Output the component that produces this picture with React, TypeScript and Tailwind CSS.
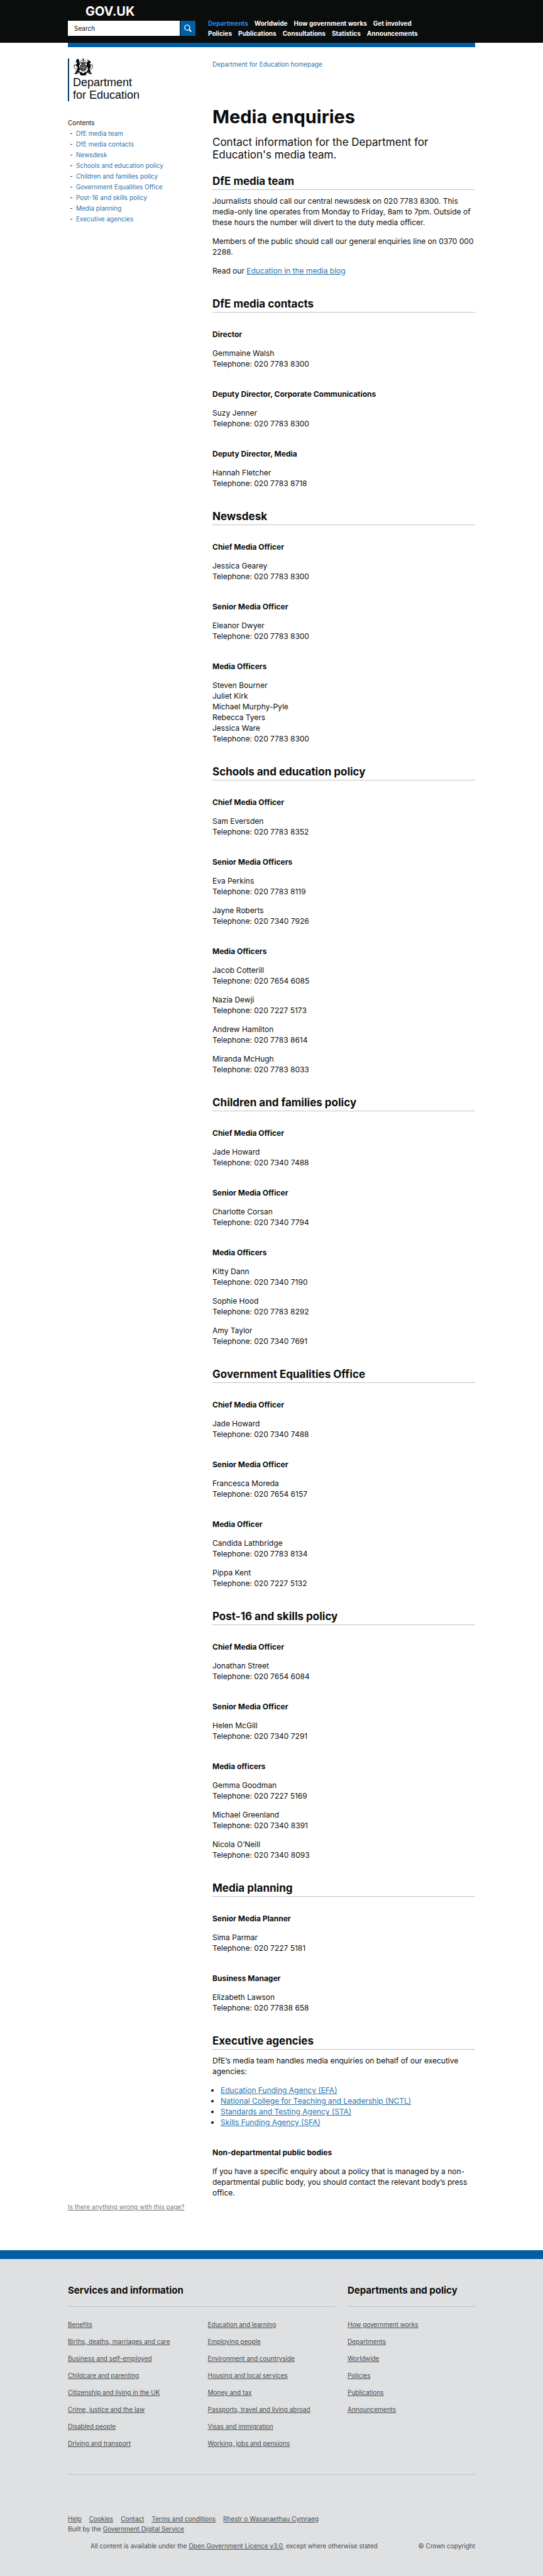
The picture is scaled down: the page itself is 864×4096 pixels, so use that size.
import React from "react";

type Contact = string[];
type Group = { role: string; contacts: Contact[] };
type Section = { title: string; groups: Group[] };

const tel = (n: string) => `Telephone: ${n}`;

const sections: Section[] = [
  {
    title: "DfE media contacts",
    groups: [
      { role: "Director", contacts: [["Gemmaine Walsh", tel("020 7783 8300")]] },
      { role: "Deputy Director, Corporate Communications", contacts: [["Suzy Jenner", tel("020 7783 8300")]] },
      { role: "Deputy Director, Media", contacts: [["Hannah Fletcher", tel("020 7783 8718")]] },
    ],
  },
  {
    title: "Newsdesk",
    groups: [
      { role: "Chief Media Officer", contacts: [["Jessica Gearey", tel("020 7783 8300")]] },
      { role: "Senior Media Officer", contacts: [["Eleanor Dwyer", tel("020 7783 8300")]] },
      {
        role: "Media Officers",
        contacts: [
          ["Steven Bourner", "Juliet Kirk", "Michael Murphy-Pyle", "Rebecca Tyers", "Jessica Ware", tel("020 7783 8300")],
        ],
      },
    ],
  },
  {
    title: "Schools and education policy",
    groups: [
      { role: "Chief Media Officer", contacts: [["Sam Eversden", tel("020 7783 8352")]] },
      {
        role: "Senior Media Officers",
        contacts: [
          ["Eva Perkins", tel("020 7783 8119")],
          ["Jayne Roberts", tel("020 7340 7926")],
        ],
      },
      {
        role: "Media Officers",
        contacts: [
          ["Jacob Cotterill", tel("020 7654 6085")],
          ["Nazia Dewji", tel("020 7227 5173")],
          ["Andrew Hamilton", tel("020 7783 8614")],
          ["Miranda McHugh", tel("020 7783 8033")],
        ],
      },
    ],
  },
  {
    title: "Children and families policy",
    groups: [
      { role: "Chief Media Officer", contacts: [["Jade Howard", tel("020 7340 7488")]] },
      { role: "Senior Media Officer", contacts: [["Charlotte Corsan", tel("020 7340 7794")]] },
      {
        role: "Media Officers",
        contacts: [
          ["Kitty Dann", tel("020 7340 7190")],
          ["Sophie Hood", tel("020 7783 8292")],
          ["Amy Taylor", tel("020 7340 7691")],
        ],
      },
    ],
  },
  {
    title: "Government Equalities Office",
    groups: [
      { role: "Chief Media Officer", contacts: [["Jade Howard", tel("020 7340 7488")]] },
      { role: "Senior Media Officer", contacts: [["Francesca Moreda", tel("020 7654 6157")]] },
      {
        role: "Media Officer",
        contacts: [
          ["Candida Lathbridge", tel("020 7783 8134")],
          ["Pippa Kent", tel("020 7227 5132")],
        ],
      },
    ],
  },
  {
    title: "Post-16 and skills policy",
    groups: [
      { role: "Chief Media Officer", contacts: [["Jonathan Street", tel("020 7654 6084")]] },
      { role: "Senior Media Officer", contacts: [["Helen McGill", tel("020 7340 7291")]] },
      {
        role: "Media officers",
        contacts: [
          ["Gemma Goodman", tel("020 7227 5169")],
          ["Michael Greenland", tel("020 7340 8391")],
          ["Nicola O’Neill", tel("020 7340 8093")],
        ],
      },
    ],
  },
  {
    title: "Media planning",
    groups: [
      { role: "Senior Media Planner", contacts: [["Sima Parmar", tel("020 7227 5181")]] },
      { role: "Business Manager", contacts: [["Elizabeth Lawson", tel("020 77838 658")]] },
    ],
  },
];

const contents = ["DfE media team", ...sections.map((s) => s.title), "Executive agencies"];

const navRows = [
  ["Departments", "Worldwide", "How government works", "Get involved"],
  ["Policies", "Publications", "Consultations", "Statistics", "Announcements"],
];

const agencies = [
  "Education Funding Agency (EFA)",
  "National College for Teaching and Leadership (NCTL)",
  "Standards and Testing Agency (STA)",
  "Skills Funding Agency (SFA)",
];

const services = [
  [
    "Benefits",
    "Births, deaths, marriages and care",
    "Business and self-employed",
    "Childcare and parenting",
    "Citizenship and living in the UK",
    "Crime, justice and the law",
    "Disabled people",
    "Driving and transport",
  ],
  [
    "Education and learning",
    "Employing people",
    "Environment and countryside",
    "Housing and local services",
    "Money and tax",
    "Passports, travel and living abroad",
    "Visas and immigration",
    "Working, jobs and pensions",
  ],
];

const policy = ["How government works", "Departments", "Worldwide", "Policies", "Publications", "Announcements"];

const slug = (s: string) => s.toLowerCase().replace(/[^a-z0-9]+/g, "-");

function Crest() {
  return (
    <svg viewBox="0 0 48 40" className="h-[27px] w-[33px]" fill="#0b0c0c" aria-hidden="true">
      {/* crown */}
      <path d="M23 0h1.6v2h1.6v1.3h-1.6V5H23V3.300h-1.600V2H23z" />
      <path
        d="M18 10.500c-2-4 .5-6.500 3-5.500 1.600.6 2.600 2 2.800 4 .2-2 1.200-3.400 2.800-4 2.500-1 5 1.500 3 5.500z"
        fill="none"
        stroke="#0b0c0c"
        strokeWidth="1.200"
      />
      <path d="M17.500 9.800h12.600l-.6 2.400H18.100z" />
      {/* shield and garter */}
      <ellipse cx="23.800" cy="21.300" rx="8" ry="9" />
      <ellipse cx="23.800" cy="21.300" rx="5.800" ry="6.800" fill="none" stroke="#fff" strokeWidth=".8" />
      <path d="M23.800 15v12.500M18.800 21.300h10M20.500 17.500v2M27 17.500v2M20.500 23.500v2M27 23.500v2" stroke="#fff" strokeWidth="1" />
      {/* lion */}
      <path d="M8 2.500l2-1.500 3 .8 1.500 2.200-.4 3.500 2 3-.4 4-1.500 3 .6 4 2 4.500-3.300 2.500-3.800-.8-1-3 2.200-2.200-1.400-3.600-2.600-1.500.6-4 2.300-2.800-1.800-1.800-1.300 1.400.3-3.600z" />
      <path d="M9 14c-3 0-4 2-6.500 1.500M8 25c-5-.5-6.500-4-4.500-6.500s-1.500-3.500-2.800-1" fill="none" stroke="#0b0c0c" strokeWidth="1.300" />
      {/* unicorn */}
      <path d="M33.800 1.200l3.400 4.200 2.300-.6 2.700 4.700-1 1.300-2-.8.500 3.500 2.300 4.500-1 4-2.400 2.700 2 3-2.600 2.600-4.500-.6 1.500-4-1.400-5-2.800-3 1.800-3.500-1.500-3.700 3.600-2.700z" />
      <path d="M40 14c2.500.5 4 1.500 5.800 0M40 25c5 0 7-3.500 5-6s.8-3.500 2.200-2" fill="none" stroke="#0b0c0c" strokeWidth="1.300" />
      {/* motto scroll */}
      <path d="M14 28.500c-3-1-7-.5-8.500 1L8 31.500 2.500 35.300l3.700 1.200 3-.3c3-2.300 4.800-3 6.300-2.700l1.200 5L20 40h7.600l3.300-1.500 1.200-5c1.500-.3 3.300.4 6.300 2.700l3 .3 3.700-1.200L39.600 31.500l2.500-2c-1.500-1.500-5.500-2-8.500-1l-2.600 3.500H16.600z" />
      <path d="M19.500 31.500l3 2.500h2.600l3-2.500zM8.500 34.200l3.500-2.400M39 34.200l-3.500-2.400" fill="#fff" stroke="#fff" strokeWidth=".8" />
    </svg>
  );
}

function H2({ id, children }: { id: string; children: React.ReactNode }) {
  return (
    <h2 id={id} className="mt-[34px] border-b border-[#bfc1c3] pb-[3px] text-[17px] leading-5 font-bold">
      {children}
    </h2>
  );
}

function H3({ first = false, children }: { first?: boolean; children: React.ReactNode }) {
  return <h3 className={first ? "mt-[26px] font-bold" : "mt-[31px] font-bold"}>{children}</h3>;
}

function ContactSection({ section }: { section: Section }) {
  return (
    <section>
      <H2 id={slug(section.title)}>{section.title}</H2>
      {section.groups.map((group, i) => (
        <React.Fragment key={group.role}>
          <H3 first={i === 0}>{group.role}</H3>
          {group.contacts.map((lines) => (
            <p key={lines[0]} className="mt-[13px]">
              {lines.map((line) => (
                <span key={line} className="block">
                  {line}
                </span>
              ))}
            </p>
          ))}
        </React.Fragment>
      ))}
    </section>
  );
}

function FooterLinks({ items }: { items: string[] }) {
  return (
    <ul className="flex flex-1 flex-col gap-[11px]">
      {items.map((item) => (
        <li key={item}>
          <a href="#" className="underline">
            {item}
          </a>
        </li>
      ))}
    </ul>
  );
}

export default function App() {
  return (
    <div className="bg-white font-['Inter','Liberation_Sans',sans-serif] text-[12px] leading-[17px] text-[#0b0c0c]">
      <header className="bg-[#0b0c0c]">
        <div className="mx-auto max-w-[648px] pt-[7px] pb-[7px]">
          <a href="#" className="block pl-7 text-[20px] leading-[22px] font-bold text-white">
            GOV.UK
          </a>
          <div className="flex items-center">
            <form className="flex w-[203px] gap-px" onSubmit={(e) => e.preventDefault()}>
              <input
                type="search"
                aria-label="Search"
                placeholder="Search"
                className="h-6 min-w-0 flex-1 bg-white px-[10px] text-[10px] text-[#0b0c0c] placeholder:text-[#0b0c0c] placeholder:opacity-100"
              />
              <button type="submit" aria-label="Search" className="flex h-6 w-6 items-center justify-center bg-[#005ea5]">
                <svg viewBox="0 0 17 17" className="h-3 w-3" fill="none" stroke="#fff" strokeWidth="2">
                  <circle cx="7" cy="7" r="5.800" />
                  <path d="M11.200 11.200L16 16" strokeWidth="3" />
                </svg>
              </button>
            </form>
            <nav className="ml-5 flex flex-col text-[10px] leading-4 font-bold text-white">
              {navRows.map((row) => (
                <div key={row[0]} className="flex gap-[10px]">
                  {row.map((item) => (
                    <a key={item} href="#" className={item === "Departments" ? "text-[#1d8feb]" : ""}>
                      {item}
                    </a>
                  ))}
                </div>
              ))}
            </nav>
          </div>
        </div>
      </header>

      <div className="mx-auto max-w-[648px]">
        <div className="h-[7px] bg-[#005ea5]" />
        <div className="mt-[18px] flex">
          <aside className="w-[230px] shrink-0 text-[10px]">
            <div className="border-l-2 border-[#003a69] pl-[6px]">
              <Crest />
              <div className="pt-px font-['Liberation_Sans',Arial,sans-serif] text-[18px] leading-5">
                Department
                <br />
                for Education
              </div>
            </div>
            <h2 className="mt-[26px]">Contents</h2>
            <ul>
              {contents.map((item) => (
                <li key={item} className="flex">
                  <span className="w-[13px] pl-[3px]">-</span>
                  <a href={`#${slug(item)}`} className="text-[#2b73aa]">
                    {item}
                  </a>
                </li>
              ))}
            </ul>
          </aside>

          <main className="min-w-0 flex-1">
            <a href="#" className="block pt-[1px] text-[10px] text-[#2b73aa]">
              Department for Education homepage
            </a>
            <h1 className="mt-[57px] text-[29px] leading-9 font-bold">Media enquiries</h1>
            <p className="mt-3 text-[17px] leading-5">
              Contact information for the Department for Education's media team.
            </p>
            <section>
              <h2
                id="dfe-media-team"
                className="mt-[22px] border-b border-[#bfc1c3] pb-[3px] text-[17px] leading-5 font-bold"
              >
                DfE media team
              </h2>
              <p className="mt-[9px]">
                Journalists should call our central newsdesk on 020 7783 8300. This media-only line operates from Monday
                to Friday, 8am to 7pm. Outside of these hours the number will divert to the duty media officer.
              </p>
              <p className="mt-[13px]">
                Members of the public should call our general enquiries line on 0370 000 2288.
              </p>
              <p className="mt-[13px]">
                Read our{" "}
                <a href="#" className="text-[#2b73aa] underline">
                  Education in the media blog
                </a>
              </p>
            </section>
            {sections.map((section) => (
              <ContactSection key={section.title} section={section} />
            ))}
            <section>
              <H2 id="executive-agencies">Executive agencies</H2>
              <p className="mt-[9px]">
                DfE’s media team handles media enquiries on behalf of our executive agencies:
              </p>
              <ul className="mt-[13px] list-disc pl-[13px]">
                {agencies.map((agency) => (
                  <li key={agency}>
                    <a href="#" className="text-[#2b73aa] underline">
                      {agency}
                    </a>
                  </li>
                ))}
              </ul>
              <H3>Non-departmental public bodies</H3>
              <p className="mt-[13px]">
                If you have a specific enquiry about a policy that is managed by a non-departmental public body, you
                should contact the relevant body’s press office.
              </p>
            </section>
          </main>
        </div>
        <div className="pt-[6px] pb-[60px] text-[10px]">
          <a href="#" className="text-[#6f777b] underline">
            Is there anything wrong with this page?
          </a>
        </div>
      </div>

      <footer className="border-t-[14px] border-[#005ea5] bg-[#dee0e2] text-[10px] leading-4 text-[#454a4c]">
        <div className="mx-auto max-w-[648px] py-10">
          <div className="flex gap-5">
            <section className="w-[425px]">
              <h2 className="border-b border-[#bfc1c3] pb-[15px] text-[15px] leading-5 font-bold text-[#0b0c0c]">
                Services and information
              </h2>
              <div className="mt-5 flex gap-5">
                {services.map((items) => (
                  <FooterLinks key={items[0]} items={items} />
                ))}
              </div>
            </section>
            <section className="flex-1">
              <h2 className="border-b border-[#bfc1c3] pb-[15px] text-[15px] leading-5 font-bold text-[#0b0c0c]">
                Departments and policy
              </h2>
              <div className="mt-5 flex">
                <FooterLinks items={policy} />
              </div>
            </section>
          </div>
          <div className="mt-[41px] border-t border-[#bfc1c3] pt-[62px]">
            <ul className="flex gap-3">
              {["Help", "Cookies", "Contact", "Terms and conditions", "Rhestr o Wasanaethau Cymraeg"].map((item) => (
                <li key={item}>
                  <a href="#" className="underline">
                    {item}
                  </a>
                </li>
              ))}
            </ul>
            <p>
              Built by the{" "}
              <a href="#" className="underline">
                Government Digital Service
              </a>
            </p>
            <div className="mt-[11px] flex justify-between pl-9">
              <p>
                All content is available under the{" "}
                <a href="#" className="underline">
                  Open Government Licence v3.0
                </a>
                , except where otherwise stated
              </p>
              <a href="#">© Crown copyright</a>
            </div>
          </div>
        </div>
      </footer>
    </div>
  );
}
